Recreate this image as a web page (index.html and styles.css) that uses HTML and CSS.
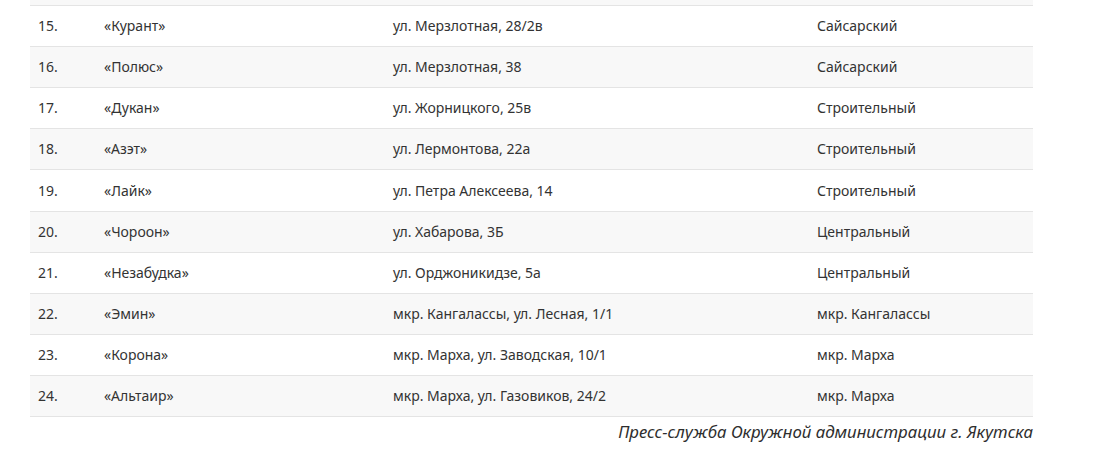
FILE: index.html
```html
<!DOCTYPE html>
<html lang="ru">
<head>
<meta charset="utf-8">
<link rel="stylesheet" href="styles.css">
</head>
<body>
<div class="article">
  <table class="list">
    <colgroup>
      <col class="c-num"><col class="c-name"><col class="c-addr"><col class="c-dist">
    </colgroup>
    <tbody>
      <tr class="alt"><td>&nbsp;</td><td></td><td></td><td></td></tr>
      <tr><td>15.</td><td>«Курант»</td><td>ул. Мерзлотная, 28/2в</td><td>Сайсарский</td></tr>
      <tr class="alt"><td>16.</td><td>«Полюс»</td><td>ул. Мерзлотная, 38</td><td>Сайсарский</td></tr>
      <tr><td>17.</td><td>«Дукан»</td><td>ул. Жорницкого, 25в</td><td>Строительный</td></tr>
      <tr class="alt"><td>18.</td><td>«Азэт»</td><td>ул. Лермонтова, 22а</td><td>Строительный</td></tr>
      <tr><td>19.</td><td>«Лайк»</td><td>ул. Петра Алексеева, 14</td><td>Строительный</td></tr>
      <tr class="alt"><td>20.</td><td>«Чороон»</td><td>ул. Хабарова, 3Б</td><td>Центральный</td></tr>
      <tr><td>21.</td><td>«Незабудка»</td><td>ул. Орджоникидзе, 5а</td><td>Центральный</td></tr>
      <tr class="alt"><td>22.</td><td>«Эмин»</td><td>мкр. Кангалассы, ул. Лесная, 1/1</td><td>мкр. Кангалассы</td></tr>
      <tr><td>23.</td><td>«Корона»</td><td>мкр. Марха, ул. Заводская, 10/1</td><td>мкр. Марха</td></tr>
      <tr class="alt"><td>24.</td><td>«Альтаир»</td><td>мкр. Марха, ул. Газовиков, 24/2</td><td>мкр. Марха</td></tr>
    </tbody>
  </table>
  <p class="source">Пресс-служба Окружной администрации г. Якутска</p>
</div>
</body>
</html>
```
FILE: styles.css
```css
html, body {
  margin: 0;
  padding: 0;
  background: #ffffff;
}
body {
  font-family: "Noto Sans", "Open Sans", sans-serif;
  color: #333333;
  overflow: hidden;
}
.article {
  width: 1003px;
  margin: -35px 0 0 30px;
}
.list {
  width: 1003px;
  border-collapse: collapse;
  table-layout: fixed;
  font-size: 14px;
}
.c-num { width: 66px; }
.c-name { width: 289px; }
.c-addr { width: 424px; }
.c-dist { width: 224px; }
.list td {
  height: 40.1px;
  padding: 0 8px;
  border-bottom: 1px solid #e4e4e4;
  vertical-align: middle;
  line-height: 20px;
  white-space: nowrap;
}
.list tr.alt td {
  background: #f8f8f8;
}
.source {
  margin: 4px 0 0;
  text-align: right;
  font-style: italic;
  font-size: 16.8px;
  line-height: 22px;
  color: #2e2e2e;
}
```
